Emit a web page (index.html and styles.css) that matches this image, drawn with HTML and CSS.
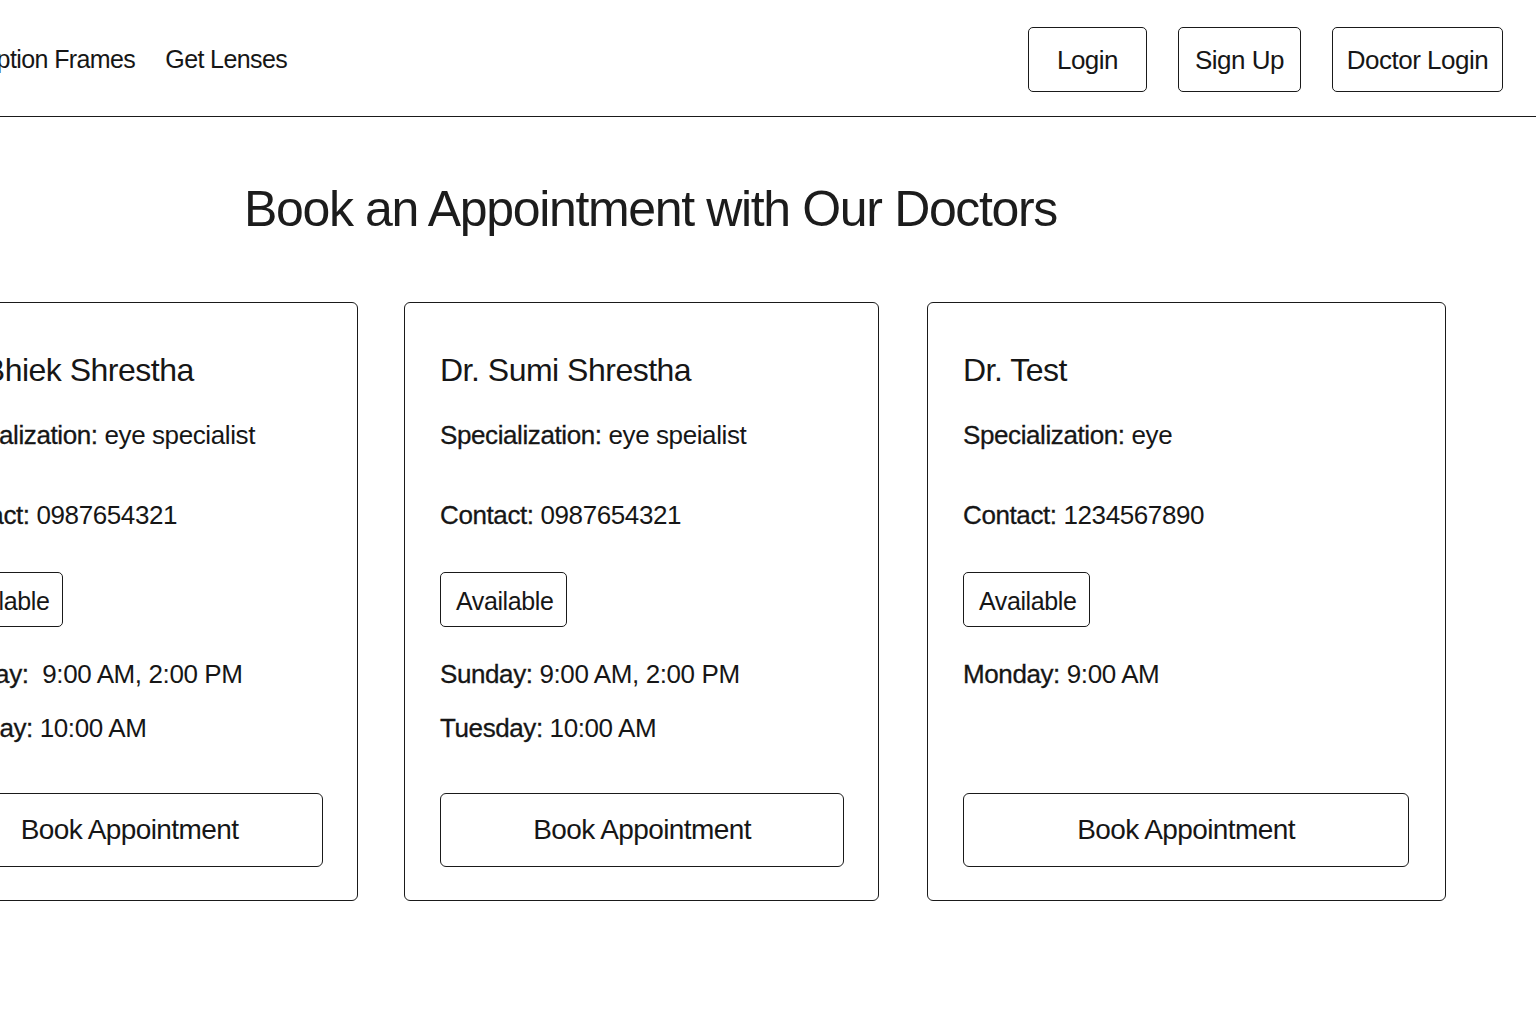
FILE: index.html
```html
<!DOCTYPE html>
<html lang="en">
<head>
<meta charset="utf-8">
<title>Book an Appointment</title>
<link rel="stylesheet" href="styles.css">
</head>
<body>
<header class="topbar">
  <nav class="nav">
    <a class="nav-link" href="#">Prescription Frames</a>
    <a class="nav-link" href="#">Get Lenses</a>
  </nav>
  <div class="auth">
    <button class="auth-btn auth-login">Login</button>
    <button class="auth-btn auth-signup">Sign Up</button>
    <button class="auth-btn auth-doctor">Doctor Login</button>
  </div>
</header>
<main class="content">
  <h1 class="title">Book an Appointment with Our Doctors</h1>
  <section class="cards">
    <article class="card card-a">
      <h2 class="name">Dr. Bhiek Shrestha</h2>
      <p class="info spec"><span class="label">Specialization:</span> eye specialist</p>
      <p class="info contact"><span class="label">Contact:</span> 0987654321</p>
      <span class="badge">Available</span>
      <div class="schedule">
        <p class="slot"><span class="label">Sunday:</span>&nbsp; 9:00 AM, 2:00 PM</p>
        <p class="slot"><span class="label">Monday:</span> 10:00 AM</p>
      </div>
      <button class="book">Book Appointment</button>
    </article>
    <article class="card card-b">
      <h2 class="name">Dr. Sumi Shrestha</h2>
      <p class="info spec"><span class="label">Specialization:</span> eye speialist</p>
      <p class="info contact"><span class="label">Contact:</span> 0987654321</p>
      <span class="badge">Available</span>
      <div class="schedule">
        <p class="slot"><span class="label">Sunday:</span> 9:00 AM, 2:00 PM</p>
        <p class="slot"><span class="label">Tuesday:</span> 10:00 AM</p>
      </div>
      <button class="book">Book Appointment</button>
    </article>
    <article class="card card-c">
      <h2 class="name">Dr. Test</h2>
      <p class="info spec"><span class="label">Specialization:</span> eye</p>
      <p class="info contact"><span class="label">Contact:</span> 1234567890</p>
      <span class="badge">Available</span>
      <div class="schedule">
        <p class="slot"><span class="label">Monday:</span> 9:00 AM</p>
      </div>
      <button class="book">Book Appointment</button>
    </article>
  </section>
</main>
</body>
</html>
```
FILE: styles.css
```css
* { box-sizing: border-box; }

html, body {
  margin: 0;
  padding: 0;
  background: #ffffff;
  overflow: hidden;
}

body {
  width: 1536px;
  height: 1024px;
  font-family: "Liberation Sans", Arial, sans-serif;
  color: #161616;
}

.topbar {
  height: 117px;
  display: flex;
  align-items: center;
  justify-content: space-between;
  border-bottom: 1.5px solid #1a1a1a;
  padding-right: 33px;
}

.nav {
  display: flex;
  align-items: center;
  gap: 30px;
  margin-left: -77px;
  padding-top: 2px;
}

.nav-link {
  font-size: 25px;
  letter-spacing: -0.6px;
  color: #161616;
  text-decoration: none;
  white-space: nowrap;
}

.auth {
  display: flex;
  gap: 31px;
  align-items: center;
  margin-top: 2px;
}

.auth-btn {
  height: 65px;
  padding: 2px 0 0 0;
  border: 1.5px solid #1a1a1a;
  border-radius: 5px;
  background: #fff;
  font-family: "Liberation Sans", Arial, sans-serif;
  font-size: 26px;
  letter-spacing: -0.5px;
  color: #161616;
}

.auth-login { width: 119px; }
.auth-signup { width: 123px; }
.auth-doctor { width: 171px; }

.content {
  padding-top: 62px;
}

.title {
  margin: 0 0 0 244px;
  font-size: 50px;
  line-height: 60px;
  font-weight: 400;
  letter-spacing: -1.35px;
  color: #1c1c1c;
  white-space: nowrap;
}

.cards {
  display: flex;
  align-items: stretch;
  gap: 46px;
  margin-top: 63px;
  margin-left: -100px;
}

.card {
  flex: none;
  display: flex;
  flex-direction: column;
  align-items: flex-start;
  border: 1.5px solid #1a1a1a;
  border-radius: 6px;
  padding: 47px 34px 33px 35px;
  background: #fff;
}

.card-a { width: 458px; }
.card-b { width: 475px; }
.card-c { width: 519px; margin-left: 2px; padding-right: 36px; }

.name {
  margin: 0;
  font-size: 32px;
  line-height: 40px;
  font-weight: 400;
  letter-spacing: -0.5px;
  white-space: nowrap;
}

.info, .slot {
  margin: 0;
  font-size: 26px;
  line-height: 32px;
  letter-spacing: -0.4px;
  white-space: nowrap;
}

.label {
  -webkit-text-stroke: 0.3px #161616;
}

.spec { margin-top: 29px; }
.contact { margin-top: 48px; }

.badge {
  display: inline-block;
  margin-top: 41px;
  height: 55px;
  padding: 3px 13px 0 15px;
  line-height: 50px;
  border: 1.5px solid #1a1a1a;
  border-radius: 5px;
  font-size: 25px;
  letter-spacing: -0.4px;
  white-space: nowrap;
}

.schedule {
  margin-top: 31px;
  margin-bottom: 49px;
  display: flex;
  flex-direction: column;
  gap: 22px;
}

.book {
  margin-top: auto;
  align-self: stretch;
  height: 74px;
  border: 1.5px solid #1a1a1a;
  border-radius: 6px;
  background: #fff;
  font-family: "Liberation Sans", Arial, sans-serif;
  font-size: 28px;
  letter-spacing: -0.6px;
  color: #161616;
  padding: 0;
}
```
